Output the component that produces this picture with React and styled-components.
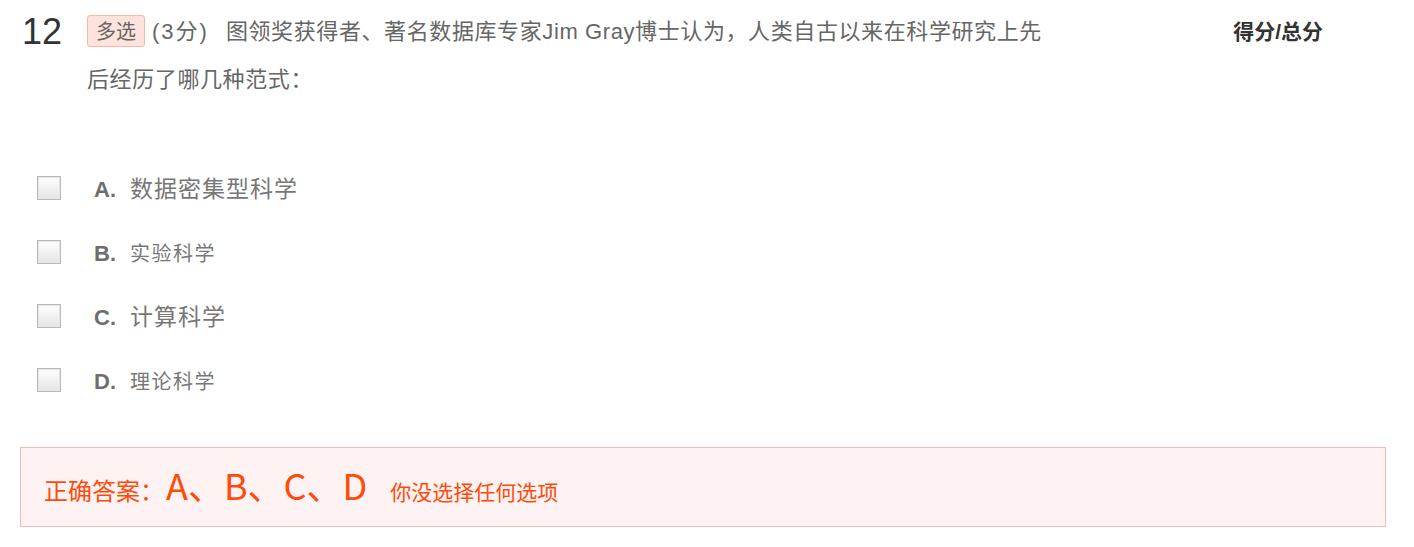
import React from 'react';
import styled, { createGlobalStyle } from 'styled-components';

const GlobalStyle = createGlobalStyle`
  html, body {
    margin: 0;
    padding: 0;
    background: #fff;
  }
  body {
    font-family: "Liberation Sans", Arial, "Noto Sans CJK SC", sans-serif;
    color: #666;
  }
`;

const options = [
  { key: 'A', text: '数据密集型科学', big: true },
  { key: 'B', text: '实验科学', big: false },
  { key: 'C', text: '计算科学', big: true },
  { key: 'D', text: '理论科学', big: false },
];

const App = () => {
  return (
    <Page>
      <GlobalStyle />
      <Header>
        <Number>12</Number>
        <Stem>
          <TypeBadge>多选</TypeBadge>
          <Points>(3分)</Points>
          <StemText>
            图领奖获得者、著名数据库专家Jim Gray博士认为，人类自古以来在科学研究上先后经历了哪几种范式：
          </StemText>
        </Stem>
        <ScoreLabel>得分/总分</ScoreLabel>
      </Header>

      <OptionList>
        {options.map((opt) => (
          <OptionRow key={opt.key}>
            <Checkbox />
            <OptionLabel>
              <OptionKey>{opt.key}.</OptionKey>
              <OptionText $big={opt.big}>{opt.text}</OptionText>
            </OptionLabel>
          </OptionRow>
        ))}
      </OptionList>

      <AnswerBox>
        <AnswerLabel>正确答案：</AnswerLabel>
        <AnswerValue>A、B、C、D</AnswerValue>
        <AnswerNote>你没选择任何选项</AnswerNote>
      </AnswerBox>
    </Page>
  );
};

const Page = styled.div`
  padding: 8px 28px 0 20px;
`;

const Header = styled.div`
  display: flex;
  align-items: flex-start;
`;

const Number = styled.div`
  width: 67px;
  padding-left: 2px;
  box-sizing: border-box;
  font-size: 36px;
  line-height: 48px;
  color: #333;
`;

const Stem = styled.div`
  width: 965px;
  font-size: 22px;
  line-height: 48px;
  color: #666;
`;

const TypeBadge = styled.span`
  display: inline-block;
  height: 32px;
  line-height: 30px;
  padding: 0 8px;
  margin-right: 7px;
  box-sizing: border-box;
  font-size: 20px;
  color: #666;
  background: #fde3db;
  border: 1px solid #f6b9a6;
  border-radius: 3px;
  font-family: "Noto Sans CJK SC", sans-serif;
`;

const Points = styled.span`
  font-size: 22px;
  letter-spacing: 2px;
  margin-right: 17px;
  color: #666;
`;

const StemText = styled.span`
  letter-spacing: 0.6px;
`;

const ScoreLabel = styled.div`
  margin-left: auto;
  margin-right: 63px;
  font-size: 21px;
  font-weight: bold;
  line-height: 48px;
  color: #333;
`;

const OptionList = styled.div`
  margin-top: 52px;
  display: flex;
  flex-direction: column;
`;

const OptionRow = styled.div`
  display: flex;
  align-items: center;
  height: 64px;
  padding-left: 17px;
`;

const Checkbox = styled.span`
  width: 24px;
  height: 24px;
  box-sizing: border-box;
  border: 1px solid #b9b9b9;
  box-shadow: inset 0 0 0 1px #e6e6e6;
  background: linear-gradient(#f9f9f2, #fbfbfb 15%, #e4e4e4);
  margin-right: 33px;
`;

const OptionLabel = styled.div`
  display: flex;
  align-items: baseline;
  line-height: 30px;
  padding-top: 3px;
`;

const OptionKey = styled.span`
  width: 36px;
  font-size: 22px;
  font-weight: bold;
  color: #6e6e6e;
`;

const OptionText = styled.span`
  font-size: ${(p) => (p.$big ? '23px' : '20px')};
  color: #777;
  letter-spacing: ${(p) => (p.$big ? '1px' : '1.5px')};
`;

const AnswerBox = styled.div`
  margin-top: 35px;
  height: 80px;
  box-sizing: border-box;
  border: 1px solid #f7b8b8;
  background: #fff2f2;
  display: flex;
  align-items: baseline;
  padding: 14px 23px 0;
  font-family: "Noto Sans CJK SC", sans-serif;
  color: #ff4a0a;
`;

const AnswerLabel = styled.span`
  font-size: 24px;
`;

const AnswerValue = styled.span`
  font-size: 36px;
  line-height: 44px;
  margin-left: 2px;
  margin-right: 23px;
`;

const AnswerNote = styled.span`
  font-size: 21px;
`;

export default App;
